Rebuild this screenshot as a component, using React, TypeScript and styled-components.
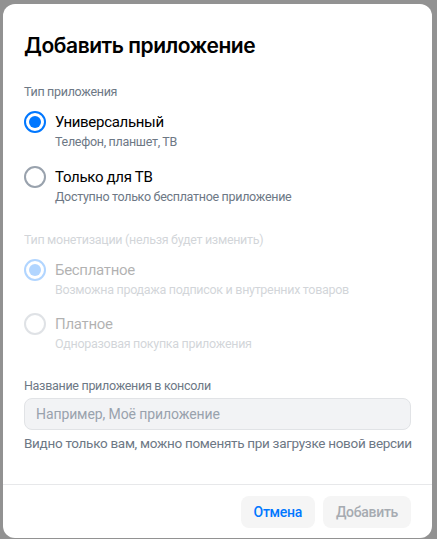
import React from "react";
import styled, { createGlobalStyle } from "styled-components";

const Global = createGlobalStyle`
  html, body { margin: 0; padding: 0; background: #929292; }
  body { font-family: Roboto, "Noto Sans", Arial, sans-serif; -webkit-font-smoothing: antialiased; }
  * { box-sizing: border-box; }
`;

const Page = styled.div`
  padding: 4px 5px 1px 3px;
`;

const Dialog = styled.div`
  width: 429px;
  height: 534px;
  background: #fff;
  border-radius: 12px;
  display: flex;
  flex-direction: column;
`;

const Body = styled.div`
  flex: 1;
  padding: 28px 21px 0 21px;
  display: flex;
  flex-direction: column;
`;

const Title = styled.h1`
  margin: 0;
  font-family: Inter, Roboto, sans-serif;
  font-size: 21px;
  line-height: 28px;
  font-weight: 600;
  color: #000;
  letter-spacing: -0.45px;
`;

const SectionLabel = styled.div<{ $faded?: boolean; $mt: number }>`
  margin-top: ${(p) => p.$mt}px;
  font-size: 12.5px;
  line-height: 16px;
  letter-spacing: -0.3px;
  color: #6d7885;
  opacity: ${(p) => (p.$faded ? 0.3 : 1)};
`;

const Option = styled.label<{ $mt: number; $disabled?: boolean }>`
  margin-top: ${(p) => p.$mt}px;
  display: grid;
  grid-template-columns: 22px 1fr;
  column-gap: 9px;
  opacity: ${(p) => (p.$disabled ? 0.3 : 1)};
`;

const Radio = styled.span<{ $checked?: boolean }>`
  width: 22px;
  height: 22px;
  margin-top: -1px;
  border-radius: 50%;
  border: 2px solid ${(p) => (p.$checked ? "#0077ff" : "#99a2ad")};
  display: flex;
  align-items: center;
  justify-content: center;
  &::after {
    content: "";
    width: 12px;
    height: 12px;
    border-radius: 50%;
    background: #0077ff;
    display: ${(p) => (p.$checked ? "block" : "none")};
  }
`;

const OptionText = styled.div`
  display: flex;
  flex-direction: column;
`;

const OptionTitle = styled.span`
  font-size: 15px;
  line-height: 20px;
  letter-spacing: -0.3px;
  color: #000;
`;

const OptionDesc = styled.span`
  margin-top: 2px;
  font-size: 12.5px;
  line-height: 16px;
  letter-spacing: -0.3px;
  color: #6d7885;
`;

const Input = styled.input`
  margin-top: 4px;
  height: 32px;
  width: 100%;
  border: 1px solid #e1e3e6;
  border-radius: 8px;
  background: #f2f3f5;
  padding: 0 11px;
  font-family: inherit;
  font-size: 14px;
  letter-spacing: -0.1px;
  color: #000;
  outline: none;
  &::placeholder { color: #99a2ad; }
`;

const Hint = styled.div`
  margin-top: 4px;
  font-size: 13.5px;
  line-height: 18px;
  letter-spacing: -0.3px;
  white-space: nowrap;
  color: #6d7885;
`;

const Footer = styled.div`
  border-top: 1px solid #e7e8ea;
  padding: 11px 21px 10px;
  display: flex;
  justify-content: flex-end;
  gap: 8px;
`;

const Button = styled.button<{ $primary?: boolean }>`
  height: 32px;
  padding: 0 13px;
  border: none;
  border-radius: 8px;
  background: #f5f5f5;
  font-family: inherit;
  font-size: 14px;
  font-weight: 500;
  letter-spacing: -0.3px;
  color: ${(p) => (p.$primary ? "#0077ff" : "#a6abb1")};
  cursor: pointer;
`;

export default function App() {
  return (
    <>
      <Global />
      <Page>
        <Dialog>
          <Body>
            <Title>Добавить приложение</Title>
            <SectionLabel $mt={24}>Тип приложения</SectionLabel>
            <Option $mt={12}>
              <Radio $checked />
              <OptionText>
                <OptionTitle>Универсальный</OptionTitle>
                <OptionDesc>Телефон, планшет, ТВ</OptionDesc>
              </OptionText>
            </Option>
            <Option $mt={17}>
              <Radio />
              <OptionText>
                <OptionTitle>Только для ТВ</OptionTitle>
                <OptionDesc>Доступно только бесплатное приложение</OptionDesc>
              </OptionText>
            </Option>
            <SectionLabel $faded $mt={27}>Тип монетизации (нельзя будет изменить)</SectionLabel>
            <Option $mt={12} $disabled>
              <Radio $checked />
              <OptionText>
                <OptionTitle>Бесплатное</OptionTitle>
                <OptionDesc>Возможна продажа подписок и внутренних товаров</OptionDesc>
              </OptionText>
            </Option>
            <Option $mt={16} $disabled>
              <Radio />
              <OptionText>
                <OptionTitle>Платное</OptionTitle>
                <OptionDesc>Одноразовая покупка приложения</OptionDesc>
              </OptionText>
            </Option>
            <SectionLabel $mt={26}>Название приложения в консоли</SectionLabel>
            <Input placeholder="Например, Моё приложение" />
            <Hint>Видно только вам, можно поменять при загрузке новой версии</Hint>
          </Body>
          <Footer>
            <Button $primary>Отмена</Button>
            <Button>Добавить</Button>
          </Footer>
        </Dialog>
      </Page>
    </>
  );
}
